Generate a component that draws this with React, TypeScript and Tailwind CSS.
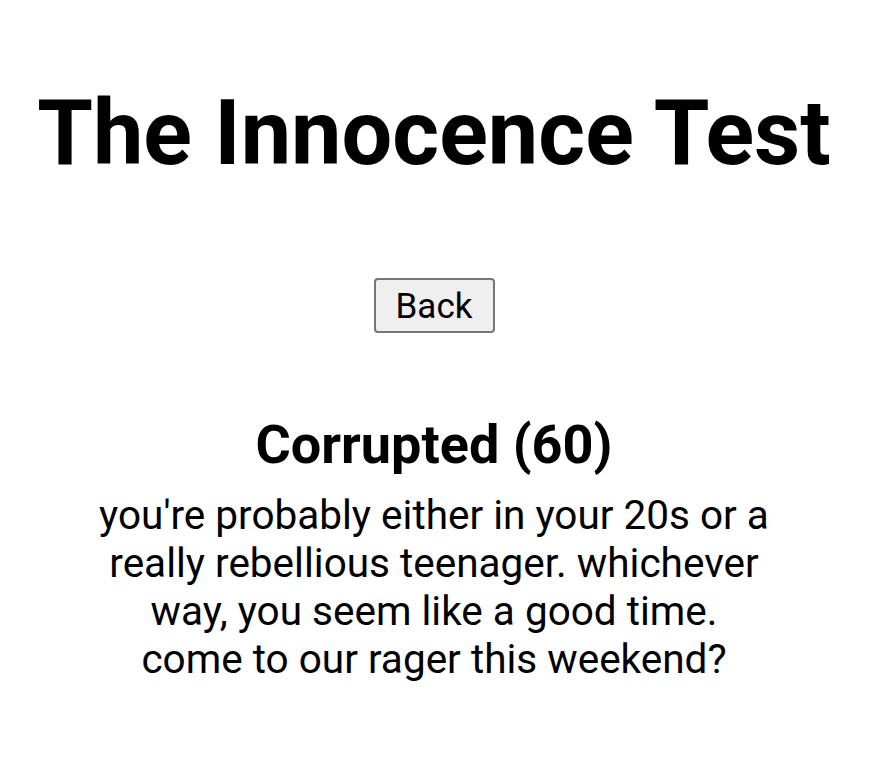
export default function App() {
  return (
    <div className="min-h-screen bg-white text-black">
      <div className="w-[868px] text-center font-['Roboto',sans-serif]">
        <h1 className="pt-[89px] text-[90px] font-bold leading-none">The Innocence Test</h1>

        <div className="mt-[99px] flex justify-center">
          <button className="h-[55px] w-[121px] rounded-[4px] border-2 border-[#767676] bg-[#efefef] pt-[2px] text-[35px] leading-none text-black">
            Back
          </button>
        </div>

        <h2 className="mt-[85px] text-[54px] font-bold leading-none">Corrupted (60)</h2>
        <p className="mt-[19px] text-[40.5px] leading-[48px]">
          you're probably either in your 20s or a
          <br />
          really rebellious teenager. whichever
          <br />
          way, you seem like a good time.
          <br />
          come to our rager this weekend?
        </p>
      </div>
    </div>
  );
}
